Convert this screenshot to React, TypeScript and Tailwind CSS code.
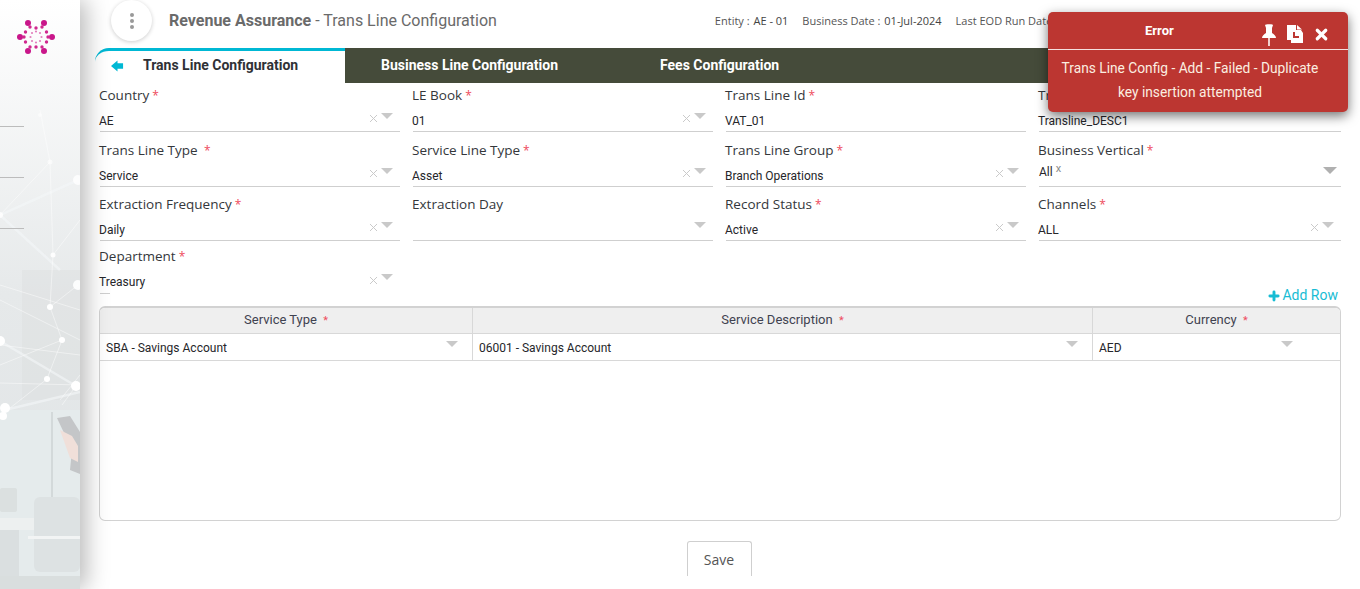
import { Plus, X } from "lucide-react";

const fields = [
  { label: "Country", value: "AE", h: "h-[55px]" },
  { label: "LE Book", value: "01", h: "h-[55px]" },
  { label: "Trans Line Id", value: "VAT_01", plain: true, h: "h-[55px]" },
  { label: "Trans Line Description", value: "Transline_DESC1", plain: true, h: "h-[55px]" },
  { label: "Trans Line Type ", value: "Service", h: "h-[54px]" },
  { label: "Service Line Type", value: "Asset", h: "h-[54px]" },
  { label: "Trans Line Group", value: "Branch Operations", h: "h-[54px]" },
  { label: "Business Vertical", value: "All", multi: true, h: "h-[54px]" },
  { label: "Extraction Frequency", value: "Daily", h: "h-[52px]" },
  { label: "Extraction Day", value: "", noStar: true, noClear: true, h: "h-[52px]" },
  { label: "Record Status", value: "Active", h: "h-[52px]" },
  { label: "Channels", value: "ALL", h: "h-[52px]" },
  { label: "Department", value: "Treasury", stub: true, h: "h-[52px]" },
];

function Caret({ large }: { large?: boolean }) {
  return (
    <span
      className={
        large
          ? "border-x-[7px] border-t-[7px] border-x-transparent border-t-[#b0b0b0]"
          : "border-x-[6px] border-t-[6px] border-x-transparent border-t-[#c9c9c9]"
      }
    />
  );
}

function Field({ f }: { f: (typeof fields)[number] }) {
  return (
    <div className={`${f.h} flex flex-col`}>
      <div className="pt-[3px] h-[23px] text-[13.5px] leading-[18px] font-medium text-[#34373b] font-['Open_Sans',sans-serif] whitespace-pre">
        {f.label}
        {!f.noStar && <span className="text-[12px] text-[#ee4a5c] ml-[3px]">*</span>}
      </div>
      <div
        className={`h-[26px] flex items-center pr-[7px] ml-px font-['Roboto',sans-serif] text-[12px] text-[#26262a] ${
          f.stub ? "" : "border-b border-[#cfcfcf]"
        }`}
      >
        <span className={f.multi ? "mt-[-3px]" : f.stub ? "-ml-px pt-[3px]" : "-ml-px pt-[5px]"}>{f.value}</span>
        {f.multi && <span className="text-[11px] text-[#8a8a8a] ml-[3px] mt-[-10px] leading-none">x</span>}
        <span className="flex-1" />
        {f.multi ? (
          <span className="-mr-[3px] mb-[7px] flex">
            <Caret large />
          </span>
        ) : f.plain ? null : (
          <span className="flex items-center gap-[1px]">
            {!f.noClear && <X size={13} strokeWidth={1.8} className="text-[#c9c9c9]" />}
            <span className="flex mb-[6px]">
              <Caret />
            </span>
          </span>
        )}
      </div>
      {f.stub && <div className="w-[10px] h-px ml-px bg-[#cfcfcf]" />}
    </div>
  );
}

function Logo() {
  const large = [[-8, -14], [8, -14], [-16, 0], [16, 0], [-8, 14], [8, 14]];
  const mid = [[-6, -10], [6, -10], [-12, 0], [12, 0], [-6, 10], [6, 10], [0, -9], [0, 10], [-10.5, -5], [10.5, -5], [-10.5, 5], [10.5, 5]];
  const inner = [[0, -5.5], [4, -4], [5.5, 0], [4, 4], [0, 5.5], [-4, 4], [-5.5, 0], [-4, -4]];
  return (
    <svg viewBox="-20 -20 40 40" className="w-[40px] h-[40px]">
      {large.map(([x, y]) => (
        <circle key={`l${x}${y}`} cx={x} cy={y} r="3" fill="#c9168a" />
      ))}
      {mid.map(([x, y]) => (
        <circle key={`m${x}${y}`} cx={x} cy={y} r="1.7" fill="#d0288f" />
      ))}
      {inner.map(([x, y]) => (
        <circle key={`i${x}${y}`} cx={x} cy={y} r="1.1" fill="#e27fbd" />
      ))}
    </svg>
  );
}

// faded photo with network lines behind the sidebar
function SidebarArt() {
  const thick = ["M0 215 L78 180", "M0 215 L60 270", "M5 410 L80 392", "M0 341 L76 386"];
  const thin = [
    "M40 110 L50 162 L53 255 L50 307 L62 340 L47 379 L5 412",
    "M0 215 L50 162",
    "M53 255 L80 220",
    "M78 285 L50 307",
    "M0 285 L80 310",
    "M0 300 L80 340",
    "M0 345 L80 355",
    "M0 383 L80 385",
    "M0 365 L62 340",
    "M76 386 L62 405",
    "M60 400 L80 375",
  ];
  const dots = [
    [40, 115, 2, 0.5],
    [50, 162, 2.5, 0.6],
    [78, 180, 5, 0.8],
    [0, 215, 3, 0.8],
    [53, 255, 2.5, 0.9],
    [78, 285, 5, 0.9],
    [50, 307, 3, 1],
    [62, 340, 3, 1],
    [0, 341, 5, 1],
    [47, 379, 3, 1],
    [76, 386, 5, 1],
    [5, 408, 5, 1],
    [3, 416, 4, 1],
  ];
  return (
    <svg viewBox="0 0 80 589" className="absolute inset-0 w-full h-full">
      <rect x="22" y="270" width="58" height="130" fill="#d9dcde" opacity="0.35" />
      <rect x="0" y="410" width="80" height="179" fill="#e5ebec" />
      <rect x="51" y="412" width="2" height="100" fill="#d3d9da" />
      <path d="M57 418 L70 416 L80 432 L80 474 L70 470 L72 450 Z" fill="#c4c6c8" />
      <path d="M60 430 L72 436 L78 446 L78 462 L70 458 Z" fill="#f0dfd9" />
      <rect x="0" y="488" width="17" height="24" rx="2" fill="#dbe0e0" />
      <rect x="0" y="518" width="35" height="12" fill="#edf0f0" />
      <rect x="34" y="497" width="46" height="75" rx="6" fill="#dde2e3" />
      <rect x="28" y="536" width="52" height="3" fill="#f2f4f4" />
      <rect x="0" y="530" width="19" height="59" fill="#dadfe0" />
      <rect x="0" y="576" width="80" height="13" fill="#d9dede" />
      {thick.map((d) => (
        <path key={d} d={d} stroke="#f3f7f8" strokeWidth="2.5" fill="none" opacity="0.6" />
      ))}
      {thin.map((d) => (
        <path key={d} d={d} stroke="#ffffff" strokeWidth="1" fill="none" opacity="0.45" />
      ))}
      {dots.map(([x, y, r, o]) => (
        <circle key={`${x}-${y}`} cx={x} cy={y} r={r} fill="#ffffff" opacity={o} />
      ))}
      <line x1="0" y1="126.5" x2="24" y2="126.5" stroke="#bcbcbc" />
      <line x1="0" y1="177.5" x2="24" y2="177.5" stroke="#bcbcbc" />
      <line x1="0" y1="228.5" x2="24" y2="228.5" stroke="#bcbcbc" />
    </svg>
  );
}

function Toast() {
  return (
    <div className="absolute left-[1048px] top-3 w-[300px] h-[100px] rounded-[5px] bg-[#bc3631] text-white shadow-[0_4px_12px_rgba(0,0,0,0.55)] font-['Roboto',sans-serif]">
      <div className="h-[38px] flex items-center border-b border-[#f5dfde] relative">
        <span className="ml-[97px] text-[13px] font-bold">Error</span>
        <svg viewBox="0 0 16 22" className="absolute left-[213px] top-[12px] w-[16px] h-[22px]" fill="#fff">
          <path d="M4 1c0-1 8-1 8 0l-1 3v5c2 1 4 3 4 5H1c0-2 2-4 4-5V4z" />
          <rect x="7" y="14" width="2" height="8" fill="#f0d0ce" />
        </svg>
        <svg viewBox="0 0 18 18" className="absolute left-[238px] top-[13px] w-[18px] h-[18px]" fill="#fff">
          <path d="M1 0h9v5h5l2 3v10H5v-3H1z" />
          <path d="M11 0l5 4.5h-5z" />
          <path d="M7 7h2v4h4v2H7z" fill="#bc3631" />
        </svg>
        <X size={17} strokeWidth={4.5} className="absolute left-[265px] top-[14px]" />
      </div>
      <div className="pl-[2px] pr-[18px] pt-[6px] text-center text-[13.75px] leading-[24px] text-[#fbeee0] whitespace-nowrap">
        Trans Line Config - Add - Failed - Duplicate
        <br />
        key insertion attempted
      </div>
    </div>
  );
}

export default function App() {
  return (
    <div className="relative flex h-[589px] w-[1360px] overflow-hidden bg-white">
      <aside className="relative z-10 w-[80px] shrink-0 bg-gradient-to-b from-[#ffffff] via-[#e6e9ea] to-[#dfe3e5] shadow-[6px_0_22px_rgba(0,0,0,0.28)]">
        <SidebarArt />
        <div className="relative flex justify-center pt-[17px] pr-[8px]">
          <Logo />
        </div>
      </aside>

      <main className="flex-1 min-w-0 flex flex-col">
        <header className="h-[48px] flex items-start shrink-0 font-['Roboto',sans-serif]">
          <div className="ml-[31px] w-[41px] h-[41px] rounded-full bg-white shadow-[0_1px_4px_rgba(0,0,0,0.2)] flex flex-col items-center justify-center gap-[2px]">
            <span className="w-[4px] h-[4px] rounded-full bg-[#999999]" />
            <span className="w-[4px] h-[4px] rounded-full bg-[#999999]" />
            <span className="w-[4px] h-[4px] rounded-full bg-[#999999]" />
          </div>
          <h1 className="ml-[17px] pt-[10px] text-[16px] leading-[21px] text-[#6a6a6a] whitespace-nowrap">
            <span className="font-bold">Revenue Assurance</span> - Trans Line Configuration
          </h1>
          <div className="flex-1 flex pl-[218px] pt-[13px] gap-[14px] text-[11px] leading-[16px] text-[#555555] whitespace-nowrap font-['Open_Sans',sans-serif]">
            <span>
              Entity : <b className="font-medium ml-[1px] text-[#444444]">AE - 01</b>
            </span>
            <span>
              Business Date : <b className="font-medium ml-[1px] text-[#444444]">01-Jul-2024</b>
            </span>
            <span>Last EOD Run Date</span>
          </div>
        </header>

        <nav className="ml-[15px] mr-[19px] h-[35px] flex shrink-0 font-['Roboto',sans-serif] text-[14px] font-bold">
          <div className="w-[250px] bg-white border-t-[3px] border-[#00b8d4] rounded-tl-[14px] flex items-center pb-[3px]">
            <svg viewBox="0 0 14 12" className="ml-[16px] w-[13px] h-[12px]" fill="#00b8d4">
              <path d="M0 6 L7 0 V3 H13 V9 H7 V12 Z" />
            </svg>
            <span className="ml-[19px] text-[#2f3136]">Trans Line Configuration</span>
          </div>
          <div className="flex-1 flex items-center bg-[#454b3a] text-white">
            <span className="ml-[36px]">Business Line Configuration</span>
            <span className="ml-[102px]">Fees Configuration</span>
          </div>
        </nav>

        <section className="px-[19px]">
          <div className="grid grid-cols-[301px_301px_301px_303px] gap-x-3">
            {fields.map((f) => (
              <Field key={f.label} f={f} />
            ))}
          </div>
          <div className="h-[15px] -mt-[8px] flex justify-end items-center pr-[3px] font-['Roboto',sans-serif] text-[14px] text-[#18bcd4]">
            <Plus size={14} strokeWidth={5} className="mr-[1px]" />
            Add Row
          </div>
        </section>

        <div className="mx-[19px] mt-[3px] h-[215px] shrink-0 rounded-[6px] border border-[#d2d2d2] border-t-2 font-['Roboto',sans-serif] text-[12px] text-[#26262a] overflow-hidden">
          <div className="grid grid-cols-[373px_620px_1fr] h-[26px] bg-[#efefef] border-b border-[#d8d8d8] text-[13px] text-[#3f4250] text-center leading-[23px]">
            <div className="border-r border-[#d8d8d8]">
              Service Type <span className="text-[11px] text-[#ee4a5c] ml-[3px]">*</span>
            </div>
            <div className="border-r border-[#d8d8d8]">
              Service Description <span className="text-[11px] text-[#ee4a5c] ml-[3px]">*</span>
            </div>
            <div>
              Currency <span className="text-[11px] text-[#ee4a5c] ml-[3px]">*</span>
            </div>
          </div>
          <div className="grid grid-cols-[373px_620px_1fr] h-[27px] border-b border-[#d8d8d8]">
            {["SBA - Savings Account", "06001 - Savings Account", "AED"].map((v, i) => (
              <div
                key={v}
                className={`flex items-center justify-between pl-[6px] ${
                  i === 2 ? "pr-[47px]" : "pr-[14px] border-r border-[#d8d8d8]"
                }`}
              >
                <span className="pt-[2px]">{v}</span>
                <span className="flex mb-[6px]">
                  <Caret />
                </span>
              </div>
            ))}
          </div>
        </div>

        <div className="mt-[20px] flex justify-center pr-[2px]">
          <button className="w-[65px] h-[35px] rounded-t-[3px] border border-b-0 border-[#cfcfcf] text-[14px] font-medium text-[#555555] font-['Open_Sans',sans-serif]">
            Save
          </button>
        </div>
      </main>

      <Toast />
    </div>
  );
}
